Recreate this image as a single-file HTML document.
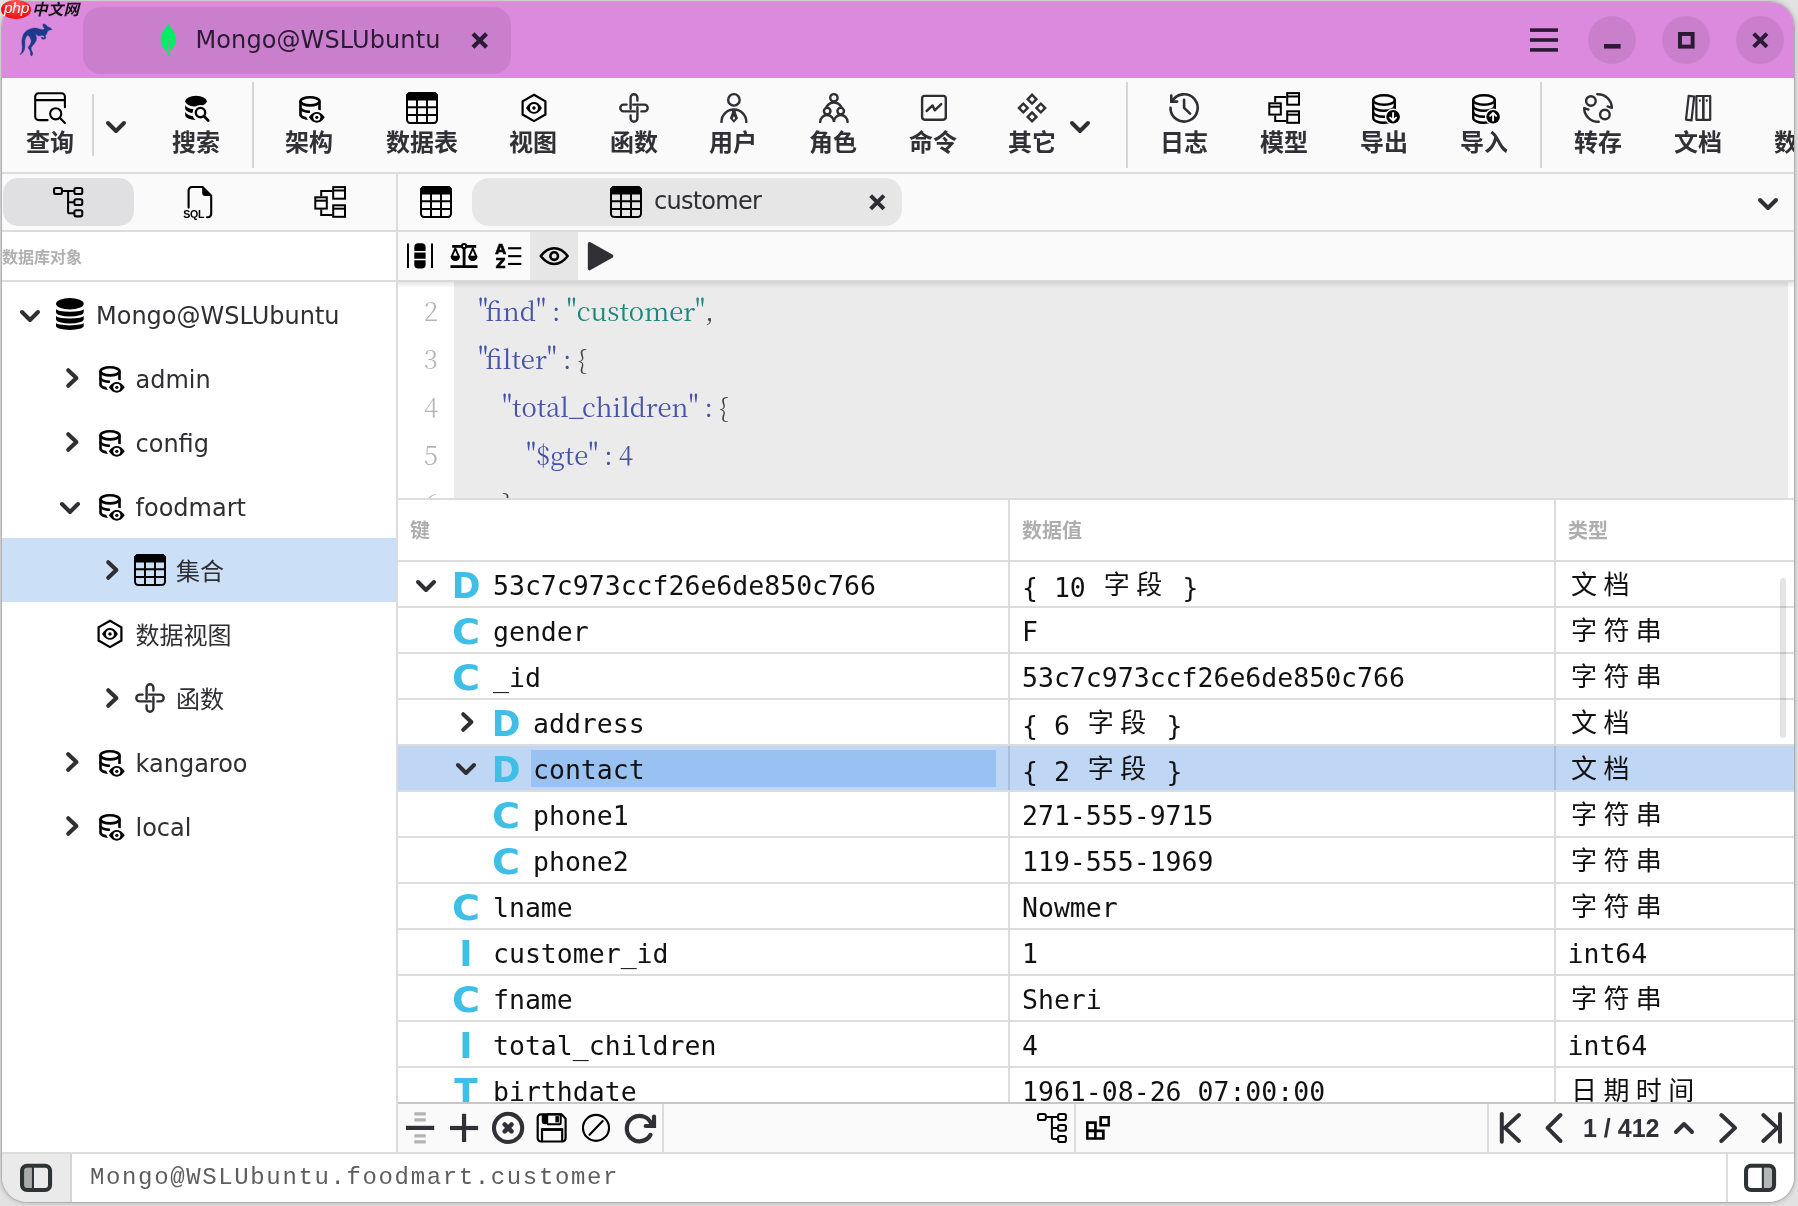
<!DOCTYPE html><html lang="zh"><head><meta charset="utf-8"><title>Kangaroo</title><style>
*{box-sizing:border-box;margin:0;padding:0}
html,body{width:1798px;height:1206px;overflow:hidden}
body{background:#e2e2e2;position:relative;font-family:"Noto Sans CJK SC","Liberation Sans",sans-serif;color:#2e2e33}
.a{position:absolute}
svg{position:absolute;overflow:visible}
#shadow{left:2px;top:2px;width:1792px;height:1200px;border-radius:25px;box-shadow:0 0 0 1px rgba(0,0,0,.10),0 0 5px 1px rgba(0,0,0,.22)}
#win{will-change:transform;left:0;top:0;width:1798px;height:1206px;clip-path:inset(2px 4px 4px 2px round 25px);background:#fff}
#tbar{left:0;top:0;width:1798px;height:78px;background:#dc8add}
#ttab{left:83px;top:7px;width:428px;height:67px;border-radius:18px;background:#ca7fcd}
.wbtn{width:48px;height:48px;border-radius:24px;background:#ca7fcd;top:16px}
#tool{left:0;top:78px;width:1798px;height:96px;background:#fafafa;border-bottom:2px solid #dcdcdc}
.tl{top:123px;width:120px;height:36px;line-height:36px;text-align:center;font-weight:700;font-size:24px;color:#303036;white-space:nowrap}
.vsep{width:2px;background:#d6d6d6}
.ui{margin-top:2px;font-family:"DejaVu Sans","Noto Sans CJK SC",sans-serif;font-size:24px;color:#2e2e33;white-space:nowrap;line-height:40px;height:40px}
.mono{margin-top:1.5px;font-family:"DejaVu Sans Mono","Liberation Mono","Noto Sans CJK SC",monospace;font-size:26.5px;color:#111;white-space:pre;line-height:46px;height:46px}
.cj{position:relative;top:-3px;left:2px;font-family:"Noto Sans CJK SC",sans-serif;font-size:26px;letter-spacing:6.4px}
.hl{border-top:2px solid #dcdcdc}
.code{font-family:"Noto Serif CJK SC","Liberation Serif",serif;font-size:25.7px;word-spacing:-.5px;line-height:48px;height:48px;white-space:pre;color:#444}
.kq{margin-right:-2.5px}.k{color:#4752a8}.s{color:#1c857c}
.ln{font-family:"Noto Serif CJK SC","Liberation Serif",serif;font-size:26px;line-height:48px;height:48px;color:#b4b4b4;width:40px;text-align:center;font-weight:300}
.th{font-weight:700;font-size:20px;color:#aeaeae;line-height:30px;height:30px;white-space:nowrap}
.tyL{margin:2px 0 0 -1px;font-family:"DejaVu Sans","Liberation Sans",sans-serif;font-weight:700;color:#3fbfe6;font-size:35.7px;line-height:50px;height:50px;width:40px;text-align:center}
.tyI{font-family:"Liberation Sans","DejaVu Sans",sans-serif;font-weight:700;color:#3fbfe6;font-size:33px;line-height:46px;height:46px;width:34px;text-align:center}
</style></head><body><div class="a" id="shadow"></div><div class="a" id="win"><div class="a" id="tbar"></div><div class="a" id="ttab"></div><svg style="left:18px;top:22px;color:#000" width="36" height="36" viewBox="18 22 36 36" fill="currentColor"><path fill="#1c3a8c" stroke="#1c3a8c" stroke-width=".5" stroke-linejoin="round" d="M20 54.700C21.600 52.800 22.400 50.400 22.300 47.200 22.200 44.500 21.700 42.300 22 39.900 22.300 37.700 22.800 35.800 23.700 34.100 24.700 32.300 26.100 31 27.900 30 29.500 29.100 31.200 28.400 33 28.200 34.600 28 36.200 28.100 37.700 28.400 39.400 28.800 40.900 29.500 42.500 29.700 43.400 29.600 44.200 29.200 44.700 28.600 44.100 27.900 43.500 27.200 43.200 26.400 42.900 25.600 42.800 24.800 43 24.200 43.400 23.900 43.900 23.900 44.300 24 45.200 24.400 46.100 25 46.800 25.700 47.200 26.100 47.600 26.500 47.900 26.900 48.700 27 49.500 27.300 50.100 27.700 50.800 28.200 51.500 28.800 52 29.500 51.300 29.800 50.600 29.900 49.800 29.900 49.100 30.200 48.400 30.600 47.900 31.100 47.400 31.800 47.100 32.600 46.800 33.300 46.500 33.900 46.200 34.500 45.800 35L45 35.900C45.500 36.300 45.900 36.800 45.900 37.300 45.900 38 45.600 38.500 45 38.800 44.300 39.200 43.500 39.300 42.800 39.200 42 39 41.400 38.400 41.200 37.700 41.500 37.300 41.900 37 42.300 37 42.500 37.500 42.800 37.800 43.200 37.900 43.600 38 44 37.800 44.300 37.500 44.400 36.900 44.200 36.400 43.900 35.900 43.200 35.600 42.400 35.300 41.700 35.200 40.900 35.600 40 35.900 39.200 35.900 38.500 35.800 37.900 35.600 37.400 35.200 36.600 34.600 35.900 33.900 35.200 33.300 35.700 34.500 36.100 35.700 36.300 37 36.500 38 36.500 39 36.300 39.900 36 40.900 35.500 41.900 34.800 42.800 34 43.900 33.100 45 32.200 46.100L31.200 47.600C31.100 48.400 31.100 49.100 31.200 49.800 31.600 50.800 32.200 51.700 32.600 52.700 32.800 53.600 32.700 54.500 32.200 55.200 32 55.600 31.700 55.900 31.300 56 30.900 55.600 30.700 55.100 30.600 54.500 30.500 53.300 30.400 52 30.100 50.800 29.600 49.800 28.900 48.900 28.200 47.900 28.200 47.500 28.300 47.100 28.600 46.800 29.300 46 29.900 45.200 30.400 44.300 30.900 43.100 31.300 41.900 31.200 40.600 31.100 39.600 30.700 38.600 30.100 37.700 29.500 36.700 28.700 35.800 27.900 35 27.100 35.500 26.500 36.200 26 37 25.400 38.100 25.100 39.300 24.900 40.600 24.700 42.300 24.900 44 24.900 45.700 24.900 47.200 24.700 48.700 24.200 50.100 23.800 51.200 23.200 52.200 22.400 53 21.700 53.700 20.900 54.300 20 54.700z"/></svg><svg style="left:158px;top:22px;color:#000" width="20" height="36" viewBox="158 22 20 36" fill="currentColor"><path d="M168.300 24C172 28.800 176 33.800 175.900 39.500 175.800 45.200 171.600 50 169.200 52V56.100h-1.800V52C164.600 50 160.600 45.200 160.700 39.500 160.700 33.800 164.600 28.800 168.300 24z" fill="#00ed64"/><path d="M168.300 35.500L168.900 51.200H167.600z" fill="#b488b4"/></svg><div class="a ui" style="left:195.5px;top:17.5px;color:#2a1a33;letter-spacing:.1px">Mongo@WSLUbuntu</div><svg style="left:471px;top:31.5px;color:#2a1a33" width="17.5" height="17" viewBox="0 0 16 16" fill="currentColor"><path d="M1.6 1.6l12.8 12.8M14.4 1.6L1.6 14.4" fill="none" stroke="currentColor" stroke-width="3.9"/></svg><svg style="left:1530px;top:28px;color:#2a1a33" width="28" height="24" viewBox="0 0 28 24" fill="currentColor"><rect x="0" y="0.3" width="28" height="3.6"/><rect x="0" y="10.2" width="28" height="3.6"/><rect x="0" y="20.1" width="28" height="3.6"/></svg><div class="a wbtn" style="left:1588px"></div><svg style="left:1603.7px;top:31.7px;color:#2a1a33" width="16.6" height="16.6" viewBox="0 0 16 16" fill="currentColor"><rect x="0" y="11.6" width="16" height="4.4"/></svg><div class="a wbtn" style="left:1662px"></div><svg style="left:1677.7px;top:31.7px;color:#2a1a33" width="16.6" height="16.6" viewBox="0 0 16 16" fill="currentColor"><rect x="1.9" y="1.9" width="12.2" height="12.2" fill="none" stroke="currentColor" stroke-width="3.8"/></svg><div class="a wbtn" style="left:1736px"></div><svg style="left:1751.7px;top:31.7px;color:#2a1a33" width="16.6" height="16.6" viewBox="0 0 16 16" fill="currentColor"><path d="M1.6 1.6l12.8 12.8M14.4 1.6L1.6 14.4" fill="none" stroke="currentColor" stroke-width="3.9"/></svg><div class="a" id="tool"></div><svg style="left:34px;top:92px;color:#000" width="32" height="32" viewBox="0 0 32 32" fill="currentColor"><g fill="none" stroke="currentColor" stroke-width="2.1" stroke-linecap="round" stroke-linejoin="round"><path d="M13.6 28.1H4.6a3.4 3.4 0 0 1-3.4-3.4V4.6a3.4 3.4 0 0 1 3.4-3.4h22.9a3.4 3.4 0 0 1 3.4 3.4v10.6M1.2 8.1h29.7"/><circle cx="21.7" cy="21.8" r="5.6"/><path d="M26 26l4.9 4.9"/></g></svg><div class="a tl" style="left:-10px">查询</div><svg style="left:180px;top:92px;color:#000" width="32" height="32" viewBox="0 0 32 32" fill="currentColor"><ellipse cx="16" cy="9.2" rx="10.8" ry="5.4"/>
<path d="M5.2 12.9c.8 2.1 3.9 3.7 8.4 4.3l-1.2 4.1c-3.6-.7-6.2-2.2-7.2-4.2z"/>
<path d="M5.2 19.8c.8 2.1 3.6 3.7 7.6 4.4 .5 1.5 1.4 2.7 2.7 3.7-5.600-.1-10.300-2.300-10.300-5z"/>
<circle cx="20.5" cy="20.6" r="7.7" fill="#fafafa"/>
<circle cx="20.5" cy="20.6" r="4.7" fill="none" stroke="currentColor" stroke-width="2.4"/>
<path d="M23.9 24.1l4.3 4.4" fill="none" stroke="currentColor" stroke-width="2.7" stroke-linecap="round"/></svg><div class="a tl" style="left:136px">搜索</div><svg style="left:299.2px;top:95.9px;color:#000" width="26" height="27" viewBox="0 0 26 27" fill="currentColor"><g fill="none" stroke="currentColor" stroke-width="2.6">
<ellipse cx="11" cy="5.35" rx="9.5" ry="4.05"/>
<path d="M1.5 5.35v13.3c0 2.2 4.2 4 9.5 4.05"/>
<path d="M20.5 5.35v9"/>
<path d="M1.5 11.8c0 2.200 4.200 4 9.500 4.050"/></g>
<path d="M7.300 21.300C10.500 15.800 14 13.800 17.800 13.800s7.300 2 10.500 7.500c-3.200 5.500-6.700 7.500-10.500 7.500s-7.300-2-10.500-7.500z" fill="#fafafa"/>
<path d="M9.850 21.300C12.600 17.400 15 15.950 17.800 15.950s5.200 1.450 7.950 5.350c-2.750 3.900-5.150 5.350-7.950 5.350s-5.200-1.450-7.950-5.350z"/>
<circle cx="17.800" cy="21.300" r="3.550" fill="#fff"/><circle cx="17.800" cy="21.300" r="1.600"/></svg><div class="a tl" style="left:249px">架构</div><svg style="left:406px;top:92px;color:#000" width="32" height="32" viewBox="0 0 32 32" fill="currentColor"><rect x="1" y="1" width="30" height="30" rx="3.2" fill="none" stroke="currentColor" stroke-width="2"/><path d="M0.2 4.2a4 4 0 0 1 4-4h23.6a4 4 0 0 1 4 4V8.4H0.2z"/><path d="M11 8v23M21 8v23M1 15.2h30M1 23.1h30" fill="none" stroke="currentColor" stroke-width="2"/></svg><div class="a tl" style="left:362px">数据表</div><svg style="left:517px;top:92px;color:#000" width="32" height="32" viewBox="0 0 32 32" fill="currentColor"><path d="M17 2.700L28.400 9.300V22.500L17 29.100 5.600 22.500V9.300z" fill="none" stroke="currentColor" stroke-width="2.200" stroke-linejoin="miter"/>
<path d="M9 15.900C11.700 11.700 14.200 10 17 10s5.300 1.700 7.900 5.900c-2.600 4.200-5.100 5.900-7.900 5.900s-5.300-1.700-8-5.900z"/>
<circle cx="16.950" cy="15.900" r="4" fill="#fafafa"/><circle cx="16.950" cy="15.900" r="1.750"/></svg><div class="a tl" style="left:473px">视图</div><svg style="left:618px;top:92px;color:#000" width="32" height="32" viewBox="0 0 32 32" fill="currentColor"><g fill="none" stroke="currentColor" stroke-width="2.4" stroke-linecap="round" style="color:#2e2e33"><path d="M12.6 16.8V5.7a3.4 3.4 0 0 1 6.8 0v2.9"/><g transform="rotate(90 16 16)"><path d="M12.6 16.8V5.7a3.4 3.4 0 0 1 6.8 0v2.9"/></g><g transform="rotate(180 16 16)"><path d="M12.6 16.8V5.7a3.4 3.4 0 0 1 6.8 0v2.9"/></g><g transform="rotate(270 16 16)"><path d="M12.6 16.8V5.7a3.4 3.4 0 0 1 6.8 0v2.9"/></g></g></svg><div class="a tl" style="left:574px">函数</div><svg style="left:717px;top:92px;color:#000" width="32" height="32" viewBox="0 0 32 32" fill="currentColor"><g style="color:#2e2e33"><g fill="none" stroke="currentColor" stroke-width="2.4" stroke-linecap="round"><circle cx="16.900" cy="7.900" r="5.750"/><path d="M4.500 29.900a12.400 12.400 0 0 1 24.800 0"/></g>
<path d="M15.200 18.300h3.400l.4 2.800 2 5.200-4.100 4.400-4.100-4.400 2-5.200z"/><path d="M16.900 24.300l1.300 2-1.300 1.600-1.300-1.600z" fill="#fafafa"/></g></svg><div class="a tl" style="left:673px">用户</div><svg style="left:817px;top:92px;color:#000" width="32" height="32" viewBox="0 0 32 32" fill="currentColor"><g fill="none" stroke="currentColor" stroke-width="2.4" stroke-linecap="round" style="color:#2e2e33"><circle cx="16.900" cy="5.800" r="3.700"/><circle cx="10.200" cy="19.100" r="3.300"/><circle cx="23.700" cy="19.100" r="3.300"/>
<path d="M9.700 14.700a8.300 8.300 0 0 1 14.400 0"/><path d="M3.200 29.900a6.850 6.850 0 0 1 13.700 0a6.850 6.850 0 0 1 13.700 0"/></g></svg><div class="a tl" style="left:773px">角色</div><svg style="left:917px;top:92px;color:#000" width="32" height="32" viewBox="0 0 32 32" fill="currentColor"><g fill="none" stroke="currentColor" stroke-width="2.4" stroke-linecap="round" stroke-linejoin="round" style="color:#2e2e33"><rect x="5.1" y="3.9" width="23.7" height="23.8" rx="2.6"/><path d="M9.600 19l6-5.600 2.200 4.900 6.400-6.200"/></g></svg><div class="a tl" style="left:873px">命令</div><svg style="left:1016px;top:92px;color:#000" width="32" height="32" viewBox="0 0 32 32" fill="currentColor"><g fill="none" stroke="currentColor" stroke-width="2.4" style="color:#2e2e33"><rect x="12.950000000000001" y="4.1" width="6.2" height="6.2" transform="rotate(45 16.05 7.2)"/><rect x="4.199999999999999" y="12.9" width="6.2" height="6.2" transform="rotate(45 7.3 16)"/><rect x="21.7" y="12.9" width="6.2" height="6.2" transform="rotate(45 24.8 16)"/><rect x="12.950000000000001" y="21.799999999999997" width="6.2" height="6.2" transform="rotate(45 16.05 24.9)"/></g></svg><div class="a tl" style="left:972px">其它</div><svg style="left:1168px;top:92px;color:#000" width="32" height="32" viewBox="0 0 32 32" fill="currentColor"><g fill="none" stroke="currentColor" stroke-width="2.6" stroke-linecap="round" stroke-linejoin="round" style="color:#2e2e33"><path d="M4.050 9.600A13.600 13.600 0 1 1 2.500 15.900"/><path d="M3.300 3.500v6.100h5.800" stroke-linejoin="miter"/><path d="M16.100 7.700v8.200l6 5.700"/></g></svg><div class="a tl" style="left:1124px">日志</div><svg style="left:1268px;top:92px;color:#000" width="32" height="32" viewBox="0 0 32 32" fill="currentColor"><g fill="none" stroke="currentColor" stroke-width="2"><rect x="19.200" y="1.100" width="11.800" height="11.600"/><path d="M19.200 4.500h11.800"/>
<rect x="1.300" y="11.300" width="11.500" height="11.300"/><path d="M1.300 14.700h11.500"/>
<rect x="19.200" y="19.300" width="11.800" height="11.500"/><path d="M19.200 22.700h11.800"/>
<path d="M7.200 10.300V5H18.200M7.200 23.600V29H18.200"/></g></svg><div class="a tl" style="left:1224px">模型</div><svg style="left:1368px;top:92px;color:#000" width="32" height="32" viewBox="0 0 32 32" fill="currentColor"><g fill="none" stroke="currentColor" stroke-width="2.400"><ellipse cx="16" cy="8" rx="10.800" ry="4.750"/>
<path d="M5.200 8v18c0 2.600 4.800 4.750 10.800 4.750s10.800-2.100 10.800-4.750V8"/>
<path d="M5.200 14c0 2.600 4.800 4.750 10.800 4.750s10.800-2.100 10.800-4.750"/><path d="M5.200 20c0 2.600 4.800 4.750 10.800 4.750s10.800-2.100 10.800-4.750"/></g>
<circle cx="25.100" cy="24.700" r="8.200" fill="#fafafa"/><circle cx="25.100" cy="24.700" r="6.800"/>
<path d="M25.1 20.9v7.400M22.100 25.600l3 3 3-3" fill="none" stroke="#fff" stroke-width="1.900" stroke-linecap="round" stroke-linejoin="round"/></svg><div class="a tl" style="left:1324px">导出</div><svg style="left:1468px;top:92px;color:#000" width="32" height="32" viewBox="0 0 32 32" fill="currentColor"><g fill="none" stroke="currentColor" stroke-width="2.400"><ellipse cx="16" cy="8" rx="10.800" ry="4.750"/>
<path d="M5.200 8v18c0 2.600 4.800 4.750 10.800 4.750s10.800-2.100 10.800-4.750V8"/>
<path d="M5.200 14c0 2.600 4.800 4.750 10.800 4.750s10.800-2.100 10.800-4.750"/><path d="M5.200 20c0 2.600 4.800 4.750 10.800 4.750s10.800-2.100 10.800-4.750"/></g>
<circle cx="25.100" cy="24.700" r="8.200" fill="#fafafa"/><circle cx="25.100" cy="24.700" r="6.800"/>
<path d="M25.1 28.500v-7.400M22.100 23.800l3-3 3 3" fill="none" stroke="#fff" stroke-width="1.900" stroke-linecap="round" stroke-linejoin="round"/></svg><div class="a tl" style="left:1424px">导入</div><svg style="left:1582px;top:92px;color:#000" width="32" height="32" viewBox="0 0 32 32" fill="currentColor"><g fill="none" stroke="currentColor" stroke-width="2.400" stroke-linecap="round" stroke-linejoin="round" style="color:#2e2e33"><circle cx="8.900" cy="9" r="4.800"/><circle cx="22.900" cy="22.500" r="4.800"/>
<path d="M15.300 2.200A13.800 13.800 0 0 1 29.800 15.600M25.600 14.400l4.200 1.600"/>
<path d="M16.700 29.800A13.800 13.800 0 0 1 2.200 16.400M6.400 17.600l-4.200-1.600"/></g></svg><div class="a tl" style="left:1538px">转存</div><svg style="left:1682px;top:92px;color:#000" width="32" height="32" viewBox="0 0 32 32" fill="currentColor"><g style="color:#2e2e33"><g fill="none" stroke="currentColor" stroke-width="2.200" stroke-linejoin="round"><path d="M6.700 3.800l5.500 .7-2.700 23.800-5.500-.700z"/>
<rect x="14.400" y="4" width="6.900" height="23.800"/><rect x="21.300" y="4" width="6.900" height="23.800"/></g>
<ellipse cx="17.850" cy="8.600" rx="1" ry="1.400"/><ellipse cx="24.750" cy="8.600" rx="1" ry="1.400"/></g></svg><div class="a tl" style="left:1638px">文档</div><div class="a tl" style="left:1774px;width:60px;text-align:left">数据</div><svg style="left:106px;top:121px;color:#2e2e33" width="20" height="12" viewBox="0 0 20 12" fill="currentColor"><path d="M2 2l8 8 8-8" fill="none" stroke="currentColor" stroke-width="4" stroke-linecap="round" stroke-linejoin="round"/></svg><svg style="left:1070px;top:121px;color:#2e2e33" width="20" height="12" viewBox="0 0 20 12" fill="currentColor"><path d="M2 2l8 8 8-8" fill="none" stroke="currentColor" stroke-width="4" stroke-linecap="round" stroke-linejoin="round"/></svg><div class="a vsep" style="left:92px;top:94px;width:2px;height:62px;"></div><div class="a vsep" style="left:252px;top:82px;width:2px;height:86px;"></div><div class="a vsep" style="left:1126px;top:82px;width:2px;height:86px;"></div><div class="a vsep" style="left:1540px;top:82px;width:2px;height:86px;"></div><div class="a " style="left:0px;top:174px;width:396px;height:58px;background:#fafafa;border-bottom:2px solid #dcdcdc"></div><div class="a " style="left:3px;top:178px;width:131px;height:48px;background:#e0e0e2;border-radius:15px"></div><svg style="left:52.8px;top:186.9px;color:#000" width="30.4" height="30.4" viewBox="0 0 30 30" fill="currentColor"><g fill="none" stroke="currentColor" stroke-width="2" stroke-linejoin="round"><rect x="1" y="1" width="7.800" height="6" rx="1.800"/><rect x="21.100" y="1" width="7.800" height="6" rx="1.800"/><rect x="21.100" y="12" width="7.800" height="5.800" rx="1.800"/><rect x="21.100" y="23" width="7.800" height="6" rx="1.800"/><path d="M8.800 4H21.100M14.900 4V24.500a1.500 1.500 0 0 0 1.500 1.500H21.100M14.900 15H21.100"/></g></svg><svg style="left:183px;top:185px;color:#000" width="30" height="34" viewBox="183 185 30 34" fill="currentColor"><path d="M188.600 207.600V190.400a3.400 3.400 0 0 1 3.400-3.400H202.600L211.200 195.600V214a3.200 3.200 0 0 1-3.200 3.200h-1" fill="none" stroke="currentColor" stroke-width="2.100" stroke-linecap="round"/><path d="M202.200 187.400l8.600 8.600h-5.600a3 3 0 0 1-3-3z"/><text x="183.300" y="217.900" font-family="Liberation Sans,DejaVu Sans,sans-serif" font-weight="700" font-size="10.600" letter-spacing="-0.300">SQL</text></svg><svg style="left:314px;top:186px;color:#000" width="32" height="32" viewBox="0 0 32 32" fill="currentColor"><g fill="none" stroke="currentColor" stroke-width="2"><rect x="19.200" y="1.100" width="11.800" height="11.600"/><path d="M19.200 4.500h11.800"/>
<rect x="1.300" y="11.300" width="11.500" height="11.300"/><path d="M1.300 14.700h11.500"/>
<rect x="19.200" y="19.300" width="11.800" height="11.500"/><path d="M19.200 22.700h11.800"/>
<path d="M7.200 10.300V5H18.200M7.200 23.600V29H18.200"/></g></svg><div class="a " style="left:0px;top:232px;width:396px;height:50px;background:#fff;border-bottom:2px solid #dcdcdc"></div><div class="a th" style="left:2px;top:241px;font-size:16px;color:#b0b0b0">数据库对象</div><div class="a " style="left:396px;top:174px;width:2px;height:980px;background:#dcdcdc"></div><div class="a " style="left:2px;top:538px;width:394px;height:64px;background:#cbdff6"></div><svg style="left:20px;top:310px;color:#2e2e33" width="20" height="12" viewBox="0 0 20 12" fill="currentColor"><path d="M2 2l8 8 8-8" fill="none" stroke="currentColor" stroke-width="4" stroke-linecap="round" stroke-linejoin="round"/></svg><svg style="left:55px;top:297px;color:#000" width="30" height="34" viewBox="55 297 30 34" fill="currentColor"><ellipse cx="69.850" cy="303.700" rx="13.850" ry="5.750"/><path d="M56 309.00A13.850 2.700 0 0 0 83.700 309.00V312.30A13.850 4.3 0 0 1 56 312.30z"/><path d="M56 315.85A13.850 2.700 0 0 0 83.700 315.85V319.15A13.850 4.3 0 0 1 56 319.15z"/><path d="M56 322.70A13.850 2.700 0 0 0 83.700 322.70V326.00A13.850 3.9 0 0 1 56 326.00z"/></svg><div class="a ui" style="left:96px;top:294px;">Mongo@WSLUbuntu</div><svg style="left:65.5px;top:368px;color:#2e2e33" width="13" height="20" viewBox="0 0 13 20" fill="currentColor"><path d="M2.2 2.2l8.2 7.8-8.2 7.8" fill="none" stroke="currentColor" stroke-width="4" stroke-linecap="round" stroke-linejoin="round"/></svg><svg style="left:99px;top:366px;color:#000" width="26" height="27" viewBox="0 0 26 27" fill="currentColor"><g fill="none" stroke="currentColor" stroke-width="2.6">
<ellipse cx="11" cy="5.35" rx="9.5" ry="4.05"/>
<path d="M1.5 5.35v13.3c0 2.2 4.2 4 9.5 4.05"/>
<path d="M20.5 5.35v9"/>
<path d="M1.5 11.8c0 2.200 4.200 4 9.500 4.050"/></g>
<path d="M7.300 21.300C10.500 15.800 14 13.800 17.800 13.800s7.300 2 10.500 7.500c-3.200 5.500-6.700 7.500-10.500 7.500s-7.300-2-10.500-7.500z" fill="#fff"/>
<path d="M9.850 21.300C12.600 17.400 15 15.950 17.800 15.950s5.200 1.450 7.950 5.350c-2.750 3.900-5.150 5.350-7.950 5.350s-5.200-1.450-7.950-5.350z"/>
<circle cx="17.800" cy="21.300" r="3.550" fill="#fff"/><circle cx="17.800" cy="21.300" r="1.600"/></svg><div class="a ui" style="left:135.5px;top:358px;">admin</div><svg style="left:65.5px;top:432px;color:#2e2e33" width="13" height="20" viewBox="0 0 13 20" fill="currentColor"><path d="M2.2 2.2l8.2 7.8-8.2 7.8" fill="none" stroke="currentColor" stroke-width="4" stroke-linecap="round" stroke-linejoin="round"/></svg><svg style="left:99px;top:430px;color:#000" width="26" height="27" viewBox="0 0 26 27" fill="currentColor"><g fill="none" stroke="currentColor" stroke-width="2.6">
<ellipse cx="11" cy="5.35" rx="9.5" ry="4.05"/>
<path d="M1.5 5.35v13.3c0 2.2 4.2 4 9.5 4.05"/>
<path d="M20.5 5.35v9"/>
<path d="M1.5 11.8c0 2.200 4.200 4 9.500 4.050"/></g>
<path d="M7.300 21.300C10.500 15.800 14 13.800 17.800 13.800s7.300 2 10.500 7.500c-3.200 5.500-6.700 7.500-10.500 7.500s-7.300-2-10.500-7.500z" fill="#fff"/>
<path d="M9.850 21.300C12.600 17.400 15 15.950 17.800 15.950s5.200 1.450 7.950 5.350c-2.750 3.900-5.150 5.350-7.950 5.350s-5.200-1.450-7.950-5.350z"/>
<circle cx="17.800" cy="21.300" r="3.550" fill="#fff"/><circle cx="17.800" cy="21.300" r="1.600"/></svg><div class="a ui" style="left:135.5px;top:422px;">config</div><svg style="left:60px;top:502px;color:#2e2e33" width="20" height="12" viewBox="0 0 20 12" fill="currentColor"><path d="M2 2l8 8 8-8" fill="none" stroke="currentColor" stroke-width="4" stroke-linecap="round" stroke-linejoin="round"/></svg><svg style="left:99px;top:494px;color:#000" width="26" height="27" viewBox="0 0 26 27" fill="currentColor"><g fill="none" stroke="currentColor" stroke-width="2.6">
<ellipse cx="11" cy="5.35" rx="9.5" ry="4.05"/>
<path d="M1.5 5.35v13.3c0 2.2 4.2 4 9.5 4.05"/>
<path d="M20.5 5.35v9"/>
<path d="M1.5 11.8c0 2.200 4.200 4 9.500 4.050"/></g>
<path d="M7.300 21.300C10.500 15.800 14 13.800 17.800 13.800s7.300 2 10.500 7.500c-3.200 5.500-6.700 7.500-10.500 7.500s-7.300-2-10.500-7.500z" fill="#fff"/>
<path d="M9.850 21.300C12.600 17.400 15 15.950 17.800 15.950s5.200 1.450 7.950 5.350c-2.750 3.900-5.150 5.350-7.950 5.350s-5.200-1.450-7.950-5.350z"/>
<circle cx="17.800" cy="21.300" r="3.550" fill="#fff"/><circle cx="17.800" cy="21.300" r="1.600"/></svg><div class="a ui" style="left:135.5px;top:486px;">foodmart</div><svg style="left:105.5px;top:560px;color:#2e2e33" width="13" height="20" viewBox="0 0 13 20" fill="currentColor"><path d="M2.2 2.2l8.2 7.8-8.2 7.8" fill="none" stroke="currentColor" stroke-width="4" stroke-linecap="round" stroke-linejoin="round"/></svg><svg style="left:134px;top:554px;color:#000" width="32" height="32" viewBox="0 0 32 32" fill="currentColor"><rect x="1" y="1" width="30" height="30" rx="3.2" fill="none" stroke="currentColor" stroke-width="2"/><path d="M0.2 4.2a4 4 0 0 1 4-4h23.6a4 4 0 0 1 4 4V8.4H0.2z"/><path d="M11 8v23M21 8v23M1 15.2h30M1 23.1h30" fill="none" stroke="currentColor" stroke-width="2"/></svg><div class="a ui" style="left:176px;top:550px;">集合</div><svg style="left:92.9px;top:618.1px;color:#000" width="32" height="32" viewBox="0 0 32 32" fill="currentColor"><path d="M17 2.700L28.400 9.300V22.500L17 29.100 5.600 22.500V9.300z" fill="none" stroke="currentColor" stroke-width="2.200" stroke-linejoin="miter"/>
<path d="M9 15.900C11.700 11.700 14.200 10 17 10s5.300 1.700 7.900 5.900c-2.600 4.200-5.100 5.900-7.900 5.900s-5.300-1.700-8-5.900z"/>
<circle cx="16.950" cy="15.900" r="4" fill="#fff"/><circle cx="16.950" cy="15.900" r="1.750"/></svg><div class="a ui" style="left:135.5px;top:614px;">数据视图</div><svg style="left:105.5px;top:688px;color:#2e2e33" width="13" height="20" viewBox="0 0 13 20" fill="currentColor"><path d="M2.2 2.2l8.2 7.8-8.2 7.8" fill="none" stroke="currentColor" stroke-width="4" stroke-linecap="round" stroke-linejoin="round"/></svg><svg style="left:134.1px;top:682.3px;color:#2e2e33" width="32" height="32" viewBox="0 0 32 32" fill="currentColor"><g fill="none" stroke="currentColor" stroke-width="2.4" stroke-linecap="round" style="color:#2e2e33"><path d="M12.6 16.8V5.7a3.4 3.4 0 0 1 6.8 0v2.9"/><g transform="rotate(90 16 16)"><path d="M12.6 16.8V5.7a3.4 3.4 0 0 1 6.8 0v2.9"/></g><g transform="rotate(180 16 16)"><path d="M12.6 16.8V5.7a3.4 3.4 0 0 1 6.8 0v2.9"/></g><g transform="rotate(270 16 16)"><path d="M12.6 16.8V5.7a3.4 3.4 0 0 1 6.8 0v2.9"/></g></g></svg><div class="a ui" style="left:176px;top:678px;">函数</div><svg style="left:65.5px;top:752px;color:#2e2e33" width="13" height="20" viewBox="0 0 13 20" fill="currentColor"><path d="M2.2 2.2l8.2 7.8-8.2 7.8" fill="none" stroke="currentColor" stroke-width="4" stroke-linecap="round" stroke-linejoin="round"/></svg><svg style="left:99px;top:750px;color:#000" width="26" height="27" viewBox="0 0 26 27" fill="currentColor"><g fill="none" stroke="currentColor" stroke-width="2.6">
<ellipse cx="11" cy="5.35" rx="9.5" ry="4.05"/>
<path d="M1.5 5.35v13.3c0 2.2 4.2 4 9.5 4.05"/>
<path d="M20.5 5.35v9"/>
<path d="M1.5 11.8c0 2.200 4.200 4 9.500 4.050"/></g>
<path d="M7.300 21.300C10.500 15.800 14 13.800 17.800 13.800s7.300 2 10.500 7.500c-3.200 5.500-6.700 7.500-10.500 7.500s-7.300-2-10.500-7.500z" fill="#fff"/>
<path d="M9.850 21.300C12.600 17.400 15 15.950 17.800 15.950s5.200 1.450 7.950 5.350c-2.750 3.900-5.150 5.350-7.950 5.350s-5.200-1.450-7.950-5.350z"/>
<circle cx="17.800" cy="21.300" r="3.550" fill="#fff"/><circle cx="17.800" cy="21.300" r="1.600"/></svg><div class="a ui" style="left:135.5px;top:742px;">kangaroo</div><svg style="left:65.5px;top:816px;color:#2e2e33" width="13" height="20" viewBox="0 0 13 20" fill="currentColor"><path d="M2.2 2.2l8.2 7.8-8.2 7.8" fill="none" stroke="currentColor" stroke-width="4" stroke-linecap="round" stroke-linejoin="round"/></svg><svg style="left:99px;top:814px;color:#000" width="26" height="27" viewBox="0 0 26 27" fill="currentColor"><g fill="none" stroke="currentColor" stroke-width="2.6">
<ellipse cx="11" cy="5.35" rx="9.5" ry="4.05"/>
<path d="M1.5 5.35v13.3c0 2.2 4.2 4 9.5 4.05"/>
<path d="M20.5 5.35v9"/>
<path d="M1.5 11.8c0 2.200 4.200 4 9.500 4.050"/></g>
<path d="M7.300 21.300C10.500 15.800 14 13.800 17.800 13.800s7.300 2 10.500 7.500c-3.200 5.500-6.700 7.500-10.500 7.500s-7.300-2-10.500-7.500z" fill="#fff"/>
<path d="M9.850 21.300C12.600 17.400 15 15.950 17.800 15.950s5.200 1.450 7.950 5.350c-2.750 3.900-5.150 5.350-7.950 5.350s-5.200-1.450-7.950-5.350z"/>
<circle cx="17.800" cy="21.300" r="3.550" fill="#fff"/><circle cx="17.800" cy="21.300" r="1.600"/></svg><div class="a ui" style="left:135.5px;top:806px;">local</div><div class="a " style="left:398px;top:174px;width:1400px;height:58px;background:#fafafa;border-bottom:2px solid #dcdcdc"></div><svg style="left:420px;top:186px;color:#000" width="32" height="32" viewBox="0 0 32 32" fill="currentColor"><rect x="1" y="1" width="30" height="30" rx="3.2" fill="none" stroke="currentColor" stroke-width="2"/><path d="M0.2 4.2a4 4 0 0 1 4-4h23.6a4 4 0 0 1 4 4V8.4H0.2z"/><path d="M11 8v23M21 8v23M1 15.2h30M1 23.1h30" fill="none" stroke="currentColor" stroke-width="2"/></svg><div class="a " style="left:472px;top:178px;width:430px;height:48px;background:#e6e6e6;border-radius:17px"></div><svg style="left:610px;top:186px;color:#000" width="32" height="32" viewBox="0 0 32 32" fill="currentColor"><rect x="1" y="1" width="30" height="30" rx="3.2" fill="none" stroke="currentColor" stroke-width="2"/><path d="M0.2 4.2a4 4 0 0 1 4-4h23.6a4 4 0 0 1 4 4V8.4H0.2z"/><path d="M11 8v23M21 8v23M1 15.2h30M1 23.1h30" fill="none" stroke="currentColor" stroke-width="2"/></svg><div class="a ui" style="left:654px;top:179.3px;letter-spacing:-.75px">customer</div><svg style="left:869.3px;top:194.2px;color:#2e2e33" width="16.6" height="16.6" viewBox="0 0 16 16" fill="currentColor"><path d="M1.6 1.6l12.8 12.8M14.4 1.6L1.6 14.4" fill="none" stroke="currentColor" stroke-width="3.9"/></svg><svg style="left:1758px;top:198px;color:#2e2e33" width="20" height="12" viewBox="0 0 20 12" fill="currentColor"><path d="M2 2l8 8 8-8" fill="none" stroke="currentColor" stroke-width="4" stroke-linecap="round" stroke-linejoin="round"/></svg><div class="a " style="left:398px;top:232px;width:1400px;height:50px;background:#fafafa;border-bottom:2px solid #d9d9d9"></div><div class="a " style="left:530px;top:232px;width:48px;height:48px;background:#e6e6e6"></div><svg style="left:407px;top:243px;color:#000" width="26" height="26" viewBox="407 243 26 26" fill="currentColor"><rect x="407" y="243.300" width="2" height="25" rx="1"/><rect x="431" y="243.300" width="2" height="25" rx="1"/><path d="M414.300 247.300a4 4 0 0 1 4-4h3.300a4 4 0 0 1 4 4V251H414.300zM414.300 252.500h11.300v6.300H414.300zM414.300 260.300h11.300v4.200a4 4 0 0 1-4 4h-3.300a4 4 0 0 1-4-4z"/></svg><svg style="left:450px;top:242px;color:#000" width="28" height="28" viewBox="450 242 28 28" fill="currentColor"><rect x="450.500" y="265.200" width="27" height="2.800"/><rect x="462.700" y="247" width="2.800" height="19"/><rect x="452.200" y="245" width="24" height="2.800"/><circle cx="464.100" cy="246.200" r="3.100"/><circle cx="464.100" cy="246.200" r="1.100" fill="#fafafa"/><g fill="none" stroke="currentColor" stroke-width="1.900" stroke-linejoin="round"><path d="M455.300 248.400l-3.600 8.300h7.200z"/><path d="M472.800 248.400l-3.600 8.300h7.200z"/></g><path d="M450.700 256.500h9.200a4.600 4.600 0 0 1-9.200 0zM468.200 256.500h9.200a4.600 4.600 0 0 1-9.200 0z"/></svg><svg style="left:495px;top:243px;color:#000" width="28" height="26" viewBox="495 243 28 26" fill="currentColor"><text x="495.300" y="253.900" font-family="DejaVu Sans,Liberation Sans,sans-serif" font-weight="700" font-size="14" stroke="currentColor" stroke-width=".5">A</text><text x="495.500" y="268" font-family="DejaVu Sans,Liberation Sans,sans-serif" font-weight="700" font-size="14" stroke="currentColor" stroke-width=".5">Z</text><rect x="508.100" y="247.200" width="13.200" height="2.100"/><rect x="508.100" y="255.100" width="13.200" height="2.100"/><rect x="508.100" y="262.900" width="13.200" height="2.100"/></svg><svg style="left:539px;top:244px;color:#000" width="30" height="24" viewBox="539 244 30 24" fill="currentColor"><path d="M540.800 256.100C545.400 249.900 549.600 248.200 554.200 248.200s8.800 1.700 13.400 7.900c-4.600 6.200-8.800 7.900-13.400 7.900s-8.800-1.700-13.400-7.900z" fill="none" stroke="currentColor" stroke-width="2.600" stroke-linejoin="round"/><circle cx="554.200" cy="256.100" r="3.800" fill="none" stroke="currentColor" stroke-width="2.600"/></svg><svg style="left:588px;top:240px;color:#303036" width="26" height="32" viewBox="588 240 26 32" fill="currentColor"><path d="M589.600 243.700L611.500 256.100 589.600 268.500z" stroke="currentColor" stroke-width="3.600" stroke-linejoin="round"/></svg><div class="a " style="left:398px;top:282px;width:56px;height:216px;background:#fff"></div><div class="a " style="left:454px;top:282px;width:1334px;height:216px;background:#ebebeb"></div><div class="a " style="left:1788px;top:282px;width:10px;height:216px;background:#fff"></div><div class="a " style="left:398px;top:282px;width:1400px;height:6px;background:linear-gradient(rgba(0,0,0,.10),rgba(0,0,0,0))"></div><div class="a " style="left:398px;top:282px;width:1400px;height:216px;overflow:hidden"><div class="a ln" style="left:13px;top:3.5px">2</div><div class="a code" style="left:80px;top:3.5px"><span class="k"><span class="kq">"</span>find" : </span><span class="s">"customer"</span>,</div><div class="a ln" style="left:13px;top:51.5px">3</div><div class="a code" style="left:80px;top:51.5px"><span class="k"><span class="kq">"</span>filter" : </span>{</div><div class="a ln" style="left:13px;top:99.5px">4</div><div class="a code" style="left:104px;top:99.5px"><span class="k">"total_children" : </span>{</div><div class="a ln" style="left:13px;top:147.5px">5</div><div class="a code" style="left:128px;top:147.5px"><span class="k">"$gte" : 4</span></div><div class="a ln" style="left:13px;top:195.5px">6</div><div class="a code" style="left:104px;top:195.5px">}</div></div><div class="a " style="left:398px;top:498px;width:1400px;height:2px;background:#dcdcdc"></div><div class="a " style="left:398px;top:500px;width:1400px;height:604px;background:#fff"></div><div class="a th" style="left:410px;top:515px;">键</div><div class="a th" style="left:1022px;top:515px;">数据值</div><div class="a th" style="left:1568px;top:515px;">类型</div><div class="a " style="left:398px;top:560px;width:1400px;height:2px;background:#dcdcdc"></div><div class="a " style="left:398px;top:606px;width:1400px;height:2px;background:#dcdcdc"></div><svg style="left:416px;top:580px;color:#2e2e33" width="20" height="12" viewBox="0 0 20 12" fill="currentColor"><path d="M2 2l8 8 8-8" fill="none" stroke="currentColor" stroke-width="4" stroke-linecap="round" stroke-linejoin="round"/></svg><div class="a tyL" style="left:447px;top:559px;transform:scaleX(0.97)">D</div><div class="a mono" style="left:493px;top:561px;">53c7c973ccf26e6de850c766</div><div class="a mono" style="left:1022px;top:561px;">{ 10 <span class="cj">字段</span> }</div><div class="a mono" style="left:1569px;top:561px;"><span class="cj">文档</span></div><div class="a " style="left:398px;top:652px;width:1400px;height:2px;background:#dcdcdc"></div><div class="a tyL" style="left:447px;top:605px;transform:scaleX(1.07)">C</div><div class="a mono" style="left:493px;top:607px;">gender</div><div class="a mono" style="left:1022px;top:607px;">F</div><div class="a mono" style="left:1569px;top:607px;"><span class="cj">字符串</span></div><div class="a " style="left:398px;top:698px;width:1400px;height:2px;background:#dcdcdc"></div><div class="a tyL" style="left:447px;top:651px;transform:scaleX(1.07)">C</div><div class="a mono" style="left:493px;top:653px;">_id</div><div class="a mono" style="left:1022px;top:653px;">53c7c973ccf26e6de850c766</div><div class="a mono" style="left:1569px;top:653px;"><span class="cj">字符串</span></div><div class="a " style="left:398px;top:744px;width:1400px;height:2px;background:#dcdcdc"></div><svg style="left:461px;top:712px;color:#2e2e33" width="13" height="20" viewBox="0 0 13 20" fill="currentColor"><path d="M2.2 2.2l8.2 7.8-8.2 7.8" fill="none" stroke="currentColor" stroke-width="4" stroke-linecap="round" stroke-linejoin="round"/></svg><div class="a tyL" style="left:487px;top:697px;transform:scaleX(0.97)">D</div><div class="a mono" style="left:533px;top:699px;">address</div><div class="a mono" style="left:1022px;top:699px;">{ 6 <span class="cj">字段</span> }</div><div class="a mono" style="left:1569px;top:699px;"><span class="cj">文档</span></div><div class="a " style="left:398px;top:746px;width:1400px;height:44px;background:#bfd7f5"></div><div class="a " style="left:531px;top:750px;width:465px;height:37px;background:#99c1f1"></div><div class="a " style="left:398px;top:790px;width:1400px;height:2px;background:#dcdcdc"></div><svg style="left:456px;top:763px;color:#2e2e33" width="20" height="12" viewBox="0 0 20 12" fill="currentColor"><path d="M2 2l8 8 8-8" fill="none" stroke="currentColor" stroke-width="4" stroke-linecap="round" stroke-linejoin="round"/></svg><div class="a tyL" style="left:487px;top:743px;transform:scaleX(0.97)">D</div><div class="a mono" style="left:533px;top:745px;">contact</div><div class="a mono" style="left:1022px;top:745px;">{ 2 <span class="cj">字段</span> }</div><div class="a mono" style="left:1569px;top:745px;"><span class="cj">文档</span></div><div class="a " style="left:398px;top:836px;width:1400px;height:2px;background:#dcdcdc"></div><div class="a tyL" style="left:487px;top:789px;transform:scaleX(1.07)">C</div><div class="a mono" style="left:533px;top:791px;">phone1</div><div class="a mono" style="left:1022px;top:791px;">271-555-9715</div><div class="a mono" style="left:1569px;top:791px;"><span class="cj">字符串</span></div><div class="a " style="left:398px;top:882px;width:1400px;height:2px;background:#dcdcdc"></div><div class="a tyL" style="left:487px;top:835px;transform:scaleX(1.07)">C</div><div class="a mono" style="left:533px;top:837px;">phone2</div><div class="a mono" style="left:1022px;top:837px;">119-555-1969</div><div class="a mono" style="left:1569px;top:837px;"><span class="cj">字符串</span></div><div class="a " style="left:398px;top:928px;width:1400px;height:2px;background:#dcdcdc"></div><div class="a tyL" style="left:447px;top:881px;transform:scaleX(1.07)">C</div><div class="a mono" style="left:493px;top:883px;">lname</div><div class="a mono" style="left:1022px;top:883px;">Nowmer</div><div class="a mono" style="left:1569px;top:883px;"><span class="cj">字符串</span></div><div class="a " style="left:398px;top:974px;width:1400px;height:2px;background:#dcdcdc"></div><div class="a tyL" style="left:447px;top:927px;transform:scaleX(1.0)">I</div><div class="a mono" style="left:493px;top:929px;">customer_id</div><div class="a mono" style="left:1022px;top:929px;">1</div><div class="a mono" style="left:1567.5px;top:929px;">int64</div><div class="a " style="left:398px;top:1020px;width:1400px;height:2px;background:#dcdcdc"></div><div class="a tyL" style="left:447px;top:973px;transform:scaleX(1.07)">C</div><div class="a mono" style="left:493px;top:975px;">fname</div><div class="a mono" style="left:1022px;top:975px;">Sheri</div><div class="a mono" style="left:1569px;top:975px;"><span class="cj">字符串</span></div><div class="a " style="left:398px;top:1066px;width:1400px;height:2px;background:#dcdcdc"></div><div class="a tyL" style="left:447px;top:1019px;transform:scaleX(1.0)">I</div><div class="a mono" style="left:493px;top:1021px;">total_children</div><div class="a mono" style="left:1022px;top:1021px;">4</div><div class="a mono" style="left:1567.5px;top:1021px;">int64</div><div class="a " style="left:398px;top:1112px;width:1400px;height:2px;background:#dcdcdc"></div><div class="a tyL" style="left:447px;top:1065px;transform:scaleX(0.96)">T</div><div class="a mono" style="left:493px;top:1067px;">birthdate</div><div class="a mono" style="left:1022px;top:1067px;">1961-08-26 07:00:00</div><div class="a mono" style="left:1569px;top:1067px;"><span class="cj">日期时间</span></div><div class="a " style="left:1008px;top:500px;width:2px;height:604px;background:#dcdcdc"></div><div class="a " style="left:1554px;top:500px;width:2px;height:604px;background:#dcdcdc"></div><div class="a " style="left:1008px;top:746px;width:2px;height:44px;background:#a8bfde"></div><div class="a " style="left:1554px;top:746px;width:2px;height:44px;background:#a8bfde"></div><div class="a " style="left:1780px;top:578px;width:6px;height:160px;background:rgba(0,0,0,.105);border-radius:3px"></div><div class="a " style="left:398px;top:1102px;width:1400px;height:52px;background:#fafafa;border-top:2px solid #cbc5c5"></div><div class="a " style="left:662px;top:1104px;width:2px;height:50px;background:#dcdcdc"></div><div class="a " style="left:1074px;top:1104px;width:2px;height:50px;background:#dcdcdc"></div><div class="a " style="left:1487px;top:1104px;width:2px;height:50px;background:#dcdcdc"></div><svg style="left:406px;top:1112px;color:#000" width="28" height="32" viewBox="406 1112 28 32" fill="currentColor"><rect x="406" y="1125.800" width="28.200" height="4.200" fill="#303036"/><g fill="#b4b4b4"><rect x="414.300" y="1112.300" width="11.500" height="3.200" rx=".6"/><rect x="414.300" y="1118.300" width="11.500" height="3.300" rx=".6"/><rect x="414.300" y="1134.200" width="11.500" height="3.300" rx=".6"/><rect x="414.300" y="1140.200" width="11.500" height="3.300" rx=".6"/></g></svg><svg style="left:450px;top:1114px;color:#303036" width="28" height="28" viewBox="450 1114 28 28" fill="currentColor"><rect x="450" y="1125.900" width="28.100" height="4.200"/><rect x="461.950" y="1113.800" width="4.200" height="28.200"/></svg><svg style="left:492px;top:1112px;color:#303036" width="32" height="32" viewBox="492 1112 32 32" fill="currentColor"><circle cx="508.100" cy="1127.900" r="14.100" fill="none" stroke="currentColor" stroke-width="4.100"/><path d="M504.700 1124.500l6.800 6.800M511.500 1124.500l-6.800 6.800" fill="none" stroke="currentColor" stroke-width="4.500" stroke-linecap="round"/></svg><svg style="left:537px;top:1113px;color:#000" width="30" height="30" viewBox="537 1113 30 30" fill="currentColor"><path d="M540.900 1114.300H561.400L565.600 1118.500V1138.300a3.200 3.200 0 0 1-3.200 3.200H540.900a3.200 3.200 0 0 1-3.200-3.200V1117.500a3.200 3.200 0 0 1 3.200-3.200z" fill="none" stroke="currentColor" stroke-width="2.200" stroke-linejoin="round"/><path d="M541.800 1114.300h6.400v10h-3.400a3 3 0 0 1-3-3z"/><path d="M547 1114.300h13.700v9a1 1 0 0 1-1 1H547" fill="none" stroke="currentColor" stroke-width="2"/><rect x="555.400" y="1116.100" width="3.500" height="6.300"/><path d="M542 1141V1129.400H562.200V1141" fill="none" stroke="currentColor" stroke-width="2.200"/><rect x="542" y="1128.300" width="20.200" height="2.600"/></svg><svg style="left:581px;top:1113px;color:#000" width="30" height="30" viewBox="581 1113 30 30" fill="currentColor"><circle cx="596" cy="1127.900" r="13" fill="none" stroke="currentColor" stroke-width="2.100"/><path d="M589.500 1134.800L602.700 1121" fill="none" stroke="currentColor" stroke-width="2.100" stroke-linecap="round"/></svg><svg style="left:624px;top:1113px;color:#303036" width="32" height="32" viewBox="624 1113 32 32" fill="currentColor"><g fill="none" stroke="currentColor" stroke-width="4.200" stroke-linecap="round"><path d="M651.600 1124.700A12.700 12.700 0 1 0 650.500 1134.900"/><path d="M654 1116.600V1126H645.700" stroke-linejoin="miter"/></g></svg><svg style="left:1037px;top:1113px;color:#000" width="30" height="30" viewBox="0 0 30 30" fill="currentColor"><g fill="none" stroke="currentColor" stroke-width="2" stroke-linejoin="round"><rect x="1" y="1" width="7.800" height="6" rx="1.800"/><rect x="21.100" y="1" width="7.800" height="6" rx="1.800"/><rect x="21.100" y="12" width="7.800" height="5.800" rx="1.800"/><rect x="21.100" y="23" width="7.800" height="6" rx="1.800"/><path d="M8.800 4H21.100M14.900 4V24.500a1.500 1.500 0 0 0 1.500 1.500H21.100M14.900 15H21.100"/></g></svg><svg style="left:1086px;top:1116px;color:#000" width="24" height="24" viewBox="0 0 24 24" fill="currentColor"><path fill-rule="evenodd" d="M13.350.1h10.550v10.400H13.350zM16 2.500v5.500h5.500V2.500zM.1 5.300H10.800V13.600H18.700V23.800H.1zM2.600 8v5.200H8.100V8zM2.600 16.300v4.900H8.100v-4.900zM10.700 16.300v4.900h5.200v-4.900z"/></svg><svg style="left:1499px;top:1111px;color:#303036" width="24" height="34" viewBox="1499 1111 24 34" fill="currentColor"><path d="M1501.800 1114V1141.700M1519 1115L1505 1127.900 1519 1141" fill="none" stroke="currentColor" stroke-width="4" stroke-linecap="round" stroke-linejoin="round"/></svg><svg style="left:1544px;top:1111px;color:#303036" width="20" height="34" viewBox="1544 1111 20 34" fill="currentColor"><path d="M1560.500 1115L1547.600 1127.900 1560.500 1141" fill="none" stroke="currentColor" stroke-width="4" stroke-linecap="round" stroke-linejoin="round"/></svg><div class="a ui" style="left:1583px;top:1106px;font-family:Liberation Sans,sans-serif;font-weight:700;font-size:25px;color:#303036">1 / 412</div><svg style="left:1674px;top:1122.3px;color:#303036" width="20" height="12" viewBox="0 0 20 12" fill="currentColor"><path d="M2 10l8-8 8 8" fill="none" stroke="currentColor" stroke-width="4" stroke-linecap="round" stroke-linejoin="round"/></svg><svg style="left:1718px;top:1111px;color:#303036" width="20" height="34" viewBox="1718 1111 20 34" fill="currentColor"><path d="M1721.300 1115L1735.100 1127.900 1721.300 1141" fill="none" stroke="currentColor" stroke-width="4" stroke-linecap="round" stroke-linejoin="round"/></svg><svg style="left:1761px;top:1111px;color:#303036" width="24" height="34" viewBox="1761 1111 24 34" fill="currentColor"><path d="M1780 1114V1141.700M1763.300 1115L1777.300 1127.900 1763.300 1141" fill="none" stroke="currentColor" stroke-width="4" stroke-linecap="round" stroke-linejoin="round"/></svg><div class="a " style="left:0px;top:1152px;width:1798px;height:54px;background:#fff;border-top:2px solid #dcdcdc"></div><div class="a " style="left:0px;top:1154px;width:70px;height:52px;background:#eaeaea"></div><div class="a " style="left:70px;top:1154px;width:2px;height:52px;background:#d4d4d4"></div><div class="a " style="left:1726px;top:1154px;width:2px;height:52px;background:#dcdcdc"></div><svg style="left:20px;top:1163px;color:#2e3436" width="33" height="30" viewBox="20 1163 33 30" fill="currentColor"><rect x="24" y="1167.700" width="8" height="20.400" fill="#a8abaa"/><rect x="22.050" y="1165.750" width="28" height="24.300" rx="5" fill="none" stroke="currentColor" stroke-width="4.100"/><rect x="31.900" y="1165" width="2.100" height="26"/></svg><svg style="left:1744px;top:1163px;color:#2e3436" width="33" height="30" viewBox="1744 1163 33 30" fill="currentColor"><rect x="1763" y="1167.700" width="9" height="20.400" fill="#b4b7b6"/><rect x="1746.050" y="1165.750" width="28" height="24.300" rx="5" fill="none" stroke="currentColor" stroke-width="4.100"/><rect x="1761.800" y="1165" width="2.100" height="26"/></svg><div class="a " style="left:90px;top:1158px;font-family:Liberation Mono,monospace;font-size:24px;letter-spacing:1.63px;line-height:40px;color:#5e5e5e;white-space:pre">Mongo@WSLUbuntu.foodmart.customer</div></div><div class="a" style="left:0;top:0;width:100px;height:24px;will-change:transform"><div class="a " style="left:1px;top:-0.5px;width:29.5px;height:19.5px;background:radial-gradient(ellipse at 50% 20%,#ff5a5a,#ee1111 70%);border-radius:50%"></div><div class="a " style="left:4px;top:-2px;font-family:Liberation Sans,sans-serif;font-style:italic;font-weight:400;font-size:15.5px;line-height:20px;color:#fff;letter-spacing:-.3px">php</div><div class="a " style="left:32px;top:-3px;font-family:Noto Sans CJK SC,sans-serif;font-style:italic;font-weight:700;font-size:15.5px;line-height:22px;color:#111;letter-spacing:.2px">中文网</div></div></body></html>
